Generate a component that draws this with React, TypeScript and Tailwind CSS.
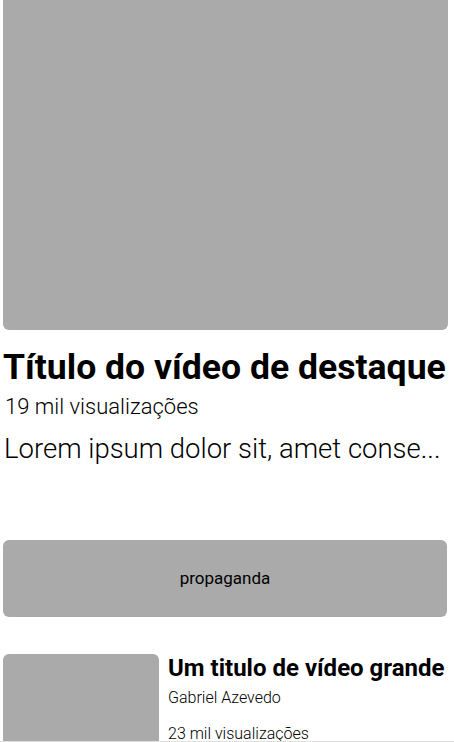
import React from "react";

export default function App() {
  return (
    <div className="min-h-screen bg-white px-[3px] font-['Roboto',sans-serif] text-black">
      <div className="h-[330px] w-[445px] rounded-b-[6px] bg-[#aaaaaa]" />
      <h1 className="mt-[16px] text-[35.6px] font-bold leading-[42px] whitespace-nowrap">
        Título do vídeo de destaque
      </h1>
      <p className="mt-[6px] pl-[2px] text-[22px] font-light leading-[26px]">19 mil visualizações</p>
      <p className="mt-[14px] whitespace-nowrap pl-[1px] text-[27.5px] font-light leading-[30px]">
        Lorem ipsum dolor sit, amet conse...
      </p>
      <div className="mt-[76px] flex h-[77px] w-[444px] items-center justify-center rounded-[6px] bg-[#aaaaaa] text-[17px] font-normal">
        propaganda
      </div>
      <div className="mt-[37px] flex gap-[9px]">
        <div className="h-[120px] w-[156px] shrink-0 rounded-[6px] bg-[#aaaaaa]" />
        <div className="flex flex-col">
          <h2 className="text-[24px] font-bold leading-[28px] whitespace-nowrap">Um titulo de vídeo grande</h2>
          <p className="mt-[6px] text-[16px] font-light leading-[19px]">Gabriel Azevedo</p>
          <p className="mt-[17px] text-[16px] font-light leading-[19px]">23 mil visualizações</p>
        </div>
      </div>
      <div className="fixed bottom-0 left-0 h-px w-full bg-[#e0e0e0]" />
    </div>
  );
}
